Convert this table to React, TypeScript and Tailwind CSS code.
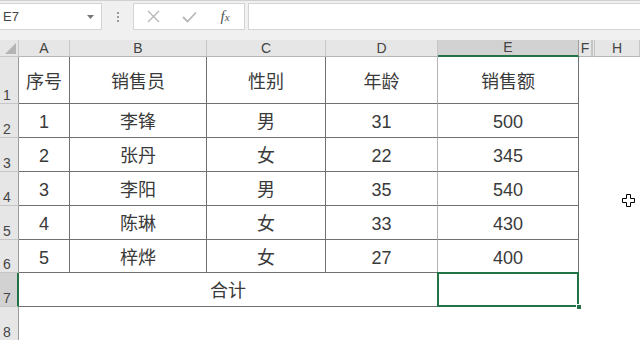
import React from "react";

const COLS = ["A", "B", "C", "D", "E", "F", "G", "H"];
const WIDTHS = "grid-cols-[19px_51px_137px_119px_112px_141px_13px_3px_45px]";
const ROWS = "grid-rows-[17px_47px_34px_34px_34px_34px_33px_34px_34px]";

const DATA: string[][] = [
  ["序号", "销售员", "性别", "年龄", "销售额"],
  ["1", "李锋", "男", "31", "500"],
  ["2", "张丹", "女", "22", "345"],
  ["3", "李阳", "男", "35", "540"],
  ["4", "陈琳", "女", "33", "430"],
  ["5", "梓烨", "女", "27", "400"],
];

const FONT = "font-['Liberation_Sans','Noto_Sans_CJK_SC',sans-serif]";

function FormulaBar() {
  return (
    <div className="h-[40px] bg-[#f0f0f0] border-t border-[#d0d0d0] flex items-start pt-[2px]">
      {/* name box */}
      <div className="w-[102px] h-[27px] bg-white border border-[#d4d4d4] border-l-0 flex items-center justify-between pl-[3px] pr-[7px]">
        <span className={`text-[13px] text-[#444] ${FONT}`}>E7</span>
        <svg width="7" height="4" viewBox="0 0 7 4"><path d="M0 0h7L3.5 4z" fill="#777" /></svg>
      </div>
      <div className="w-[31px] h-[27px] flex flex-col items-center justify-center gap-[2px]">
        <span className="w-[2px] h-[2px] bg-[#9a9a9a]" />
        <span className="w-[2px] h-[2px] bg-[#9a9a9a]" />
        <span className="w-[2px] h-[2px] bg-[#9a9a9a]" />
      </div>
      <div className="w-[112px] h-[27px] bg-white border border-[#d4d4d4] flex items-center">
        <div className="w-[38px] flex justify-center">
          <svg width="13" height="13" viewBox="0 0 13 13"><path d="M1 1l11 11M12 1L1 12" stroke="#b8b8b8" strokeWidth="1.4" /></svg>
        </div>
        <div className="w-[34px] flex justify-center">
          <svg width="15" height="12" viewBox="0 0 15 12"><path d="M1 6l4.5 4.5L14 1.5" stroke="#b8b8b8" strokeWidth="1.8" fill="none" /></svg>
        </div>
        <div className="w-[38px] flex justify-center">
          <span className="font-['Liberation_Serif',serif] italic text-[15px] text-[#555] leading-none">
            f<span className="text-[11px]">x</span>
          </span>
        </div>
      </div>
      <div className="flex-1 ml-[3px] h-[27px] bg-white border border-[#d4d4d4] border-r-0" />
    </div>
  );
}

function Cursor() {
  return (
    <svg className="absolute left-[622px] top-[194px]" width="13" height="13" viewBox="0 0 13 13">
      <path d="M4.5 0.5h4v4h4v4h-4v4h-4v-4h-4v-4h4z" fill="white" stroke="black" strokeWidth="1" />
    </svg>
  );
}

export default function App() {
  const cells: React.ReactNode[] = [];

  // column header row
  cells.push(
    <div key="corner" className="bg-[#e6e6e6] border-r border-b border-[#c6c6c6] flex items-end justify-end p-[2px]">
      <svg width="11" height="11" viewBox="0 0 11 11"><path d="M11 0v11H0z" fill="#b4b4b4" /></svg>
    </div>
  );
  COLS.forEach((c) => {
    const sel = c === "E";
    const hidden = c === "G";
    cells.push(
      <div
        key={"h" + c}
        className={`flex items-center justify-center text-[14px] text-[#444] ${FONT} ${
          sel ? "bg-[#d2d2d2] border-b-2 border-b-[#217346] border-r border-r-[#9f9f9f]" : "bg-[#e6e6e6] border-b border-b-[#b5b5b5] border-r border-r-[#c6c6c6]"
        } ${hidden ? "border-l border-l-[#c6c6c6]" : ""}`}
      >
        {hidden ? "" : c}
      </div>
    );
  });

  for (let r = 1; r <= 8; r++) {
    const selRow = r === 7;
    cells.push(
      <div
        key={"r" + r}
        className={`flex items-end pl-[3px] pb-[1px] text-[14px] leading-none text-[#444] ${FONT} border-b border-b-[#c6c6c6] ${
          selRow ? "bg-[#d2d2d2] border-r-2 border-r-[#217346]" : "bg-[#e6e6e6] border-r border-r-[#9a9a9a]"
        }`}
      >
        {r}
      </div>
    );

    if (r <= 6) {
      DATA[r - 1].forEach((v, i) => {
        const lightRight = i === 3;
        cells.push(
          <div
            key={r + "-" + i}
            className={`flex items-center justify-center pt-[4px] text-[18px] text-[#3a3a3a] ${FONT} border-b border-b-[#707070] border-r ${
              lightRight ? "border-r-[#b4b4b4]" : "border-r-[#707070]"
            }`}
          >
            {v}
          </div>
        );
      });
    } else if (r === 7) {
      cells.push(
        <div
          key="merged"
          className={`col-span-4 flex items-center justify-center pt-[4px] text-[18px] text-[#3a3a3a] ${FONT} border-b border-r border-[#707070]`}
        >
          合计
        </div>
      );
      cells.push(
        <div key="e7" className="relative border-b border-r border-[#707070]">
          <div className="absolute -left-[1px] -top-[1px] -right-[1px] -bottom-[1px] border-2 border-[#217346]" />
          <div className="absolute -right-[4px] -bottom-[4px] w-[6px] h-[6px] bg-[#217346] border border-white" />
        </div>
      );
    } else {
      for (let i = 0; i < 5; i++) {
        cells.push(<div key={r + "-" + i} />);
      }
    }
    // F, G, H — gridlines hidden
    cells.push(<div key={r + "F"} />);
    cells.push(<div key={r + "G"} />);
    cells.push(<div key={r + "H"} />);
  }

  return (
    <div className="relative w-[640px] h-[340px] overflow-hidden bg-white">
      <FormulaBar />
      <div className={`grid ${WIDTHS} ${ROWS}`}>{cells}</div>
      <Cursor />
    </div>
  );
}
